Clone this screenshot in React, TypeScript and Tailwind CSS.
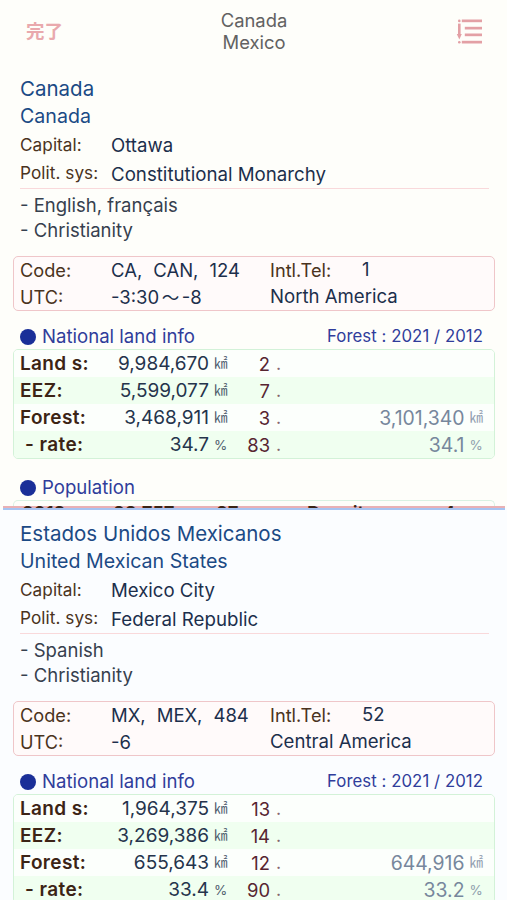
import React from "react";

type LandRow = {
  label: string;
  indent?: boolean;
  value: string;
  unit: string;
  rank: string;
  past?: string;
};

type Country = {
  native: string;
  english: string;
  capital: string;
  system: string;
  language: string;
  religion: string;
  codes: string[];
  tel: string;
  utc: string[];
  region: string;
  land: LandRow[];
};

const canada: Country = {
  native: "Canada",
  english: "Canada",
  capital: "Ottawa",
  system: "Constitutional Monarchy",
  language: "English, français",
  religion: "Christianity",
  codes: ["CA,", "CAN,", "124"],
  tel: "1",
  utc: ["-3:30", "-8"],
  region: "North America",
  land: [
    { label: "Land s:", value: "9,984,670", unit: "㎢", rank: "2" },
    { label: "EEZ:", value: "5,599,077", unit: "㎢", rank: "7" },
    { label: "Forest:", value: "3,468,911", unit: "㎢", rank: "3", past: "3,101,340" },
    { label: "- rate:", indent: true, value: "34.7", unit: "%", rank: "83", past: "34.1" },
  ],
};

const mexico: Country = {
  native: "Estados Unidos Mexicanos",
  english: "United Mexican States",
  capital: "Mexico City",
  system: "Federal Republic",
  language: "Spanish",
  religion: "Christianity",
  codes: ["MX,", "MEX,", "484"],
  tel: "52",
  utc: ["-6"],
  region: "Central America",
  land: [
    { label: "Land s:", value: "1,964,375", unit: "㎢", rank: "13" },
    { label: "EEZ:", value: "3,269,386", unit: "㎢", rank: "14" },
    { label: "Forest:", value: "655,643", unit: "㎢", rank: "12", past: "644,916" },
    { label: "- rate:", indent: true, value: "33.4", unit: "%", rank: "90", past: "33.2" },
  ],
};

function Unit({ unit }: { unit: string }) {
  return (
    <span className="ml-[5px] w-[14px] shrink-0 text-left text-[13.5px] leading-none opacity-80">
      {unit}
    </span>
  );
}

function SectionTitle({ title, note }: { title: string; note?: string }) {
  return (
    <div className="flex h-[26px] items-center pl-5 pr-[24px] text-[#303d9b]">
      <span className="mr-[6px] size-4 rounded-full bg-[#1a2f98]" />
      <span className="text-[18.6px]">{title}</span>
      {note && <span className="ml-auto text-[16.8px] tracking-[0.05px]">{note}</span>}
    </div>
  );
}

function CountryInfo({ country }: { country: Country }) {
  return (
    <>
      <div className="px-5 pt-3 text-[#1b4a85]">
        <h1 className="h-[27px] text-[20.5px] leading-[27px]">{country.native}</h1>
        <h2 className="h-[29px] text-[19.6px] leading-7">{country.english}</h2>
      </div>
      <div className="ml-5 mr-[18px] h-[58px] border-b border-[#f9d9db]">
        <div className="flex h-[29px] items-center">
          <span className="w-[91px] pb-px text-[17.2px] tracking-[0.05px] text-[#4a3320]">Capital:</span>
          <span className="text-[18.6px] text-[#1c2f4c]">{country.capital}</span>
        </div>
        <div className="flex h-[29px] items-center">
          <span className="w-[91px] pb-1 text-[17.2px] tracking-[0.05px] text-[#4a3320]">Polit. sys:</span>
          <span className="pt-[2px] text-[18.7px] text-[#1c2f4c]">{country.system}</span>
        </div>
      </div>
      <div className="h-[67px] px-5 pt-1 text-[18.5px] leading-[25px] text-[#36404e]">
        <div>- {country.language}</div>
        <div>- {country.religion}</div>
      </div>
      <div className="ml-[13px] mr-3 h-[55px] rounded-[5px] border border-[#efc6c9] bg-[#fffafa] pl-[6px] text-[18.5px] text-[#1c2f4c]">
        <div className="flex h-[27px] items-center">
          <span className="w-[91px] text-[18.2px] text-[#4a3320]">Code:</span>
          <span className="flex w-[159px] gap-[11px]">
            {country.codes.map((code) => (
              <span key={code}>{code}</span>
            ))}
          </span>
          <span className="w-[92px] text-[18.2px] text-[#4a3320]">Intl.Tel:</span>
          <span className="pb-[2px]">{country.tel}</span>
        </div>
        <div className="flex h-[27px] items-center">
          <span className="w-[91px] text-[18.2px] text-[#4a3320]">UTC:</span>
          <span className="flex w-[159px] items-center">
            {country.utc[0]}
            {country.utc[1] && (
              <>
                <span className="mx-[2.5px] text-[17.5px] leading-none">～</span>
                {country.utc[1]}
              </>
            )}
          </span>
          <span className="pb-[2px] text-[18.6px]">{country.region}</span>
        </div>
      </div>
      <div className="pt-[13px]">
        <SectionTitle title="National land info" note="Forest : 2021 / 2012" />
      </div>
      <div className="-mt-px ml-[13px] mr-3 h-[110px] overflow-hidden rounded-[5px] border border-[#d3f2d8]">
        {country.land.map((row) => (
          <div
            key={row.label}
            className="flex h-[27.1px] items-center bg-[#fcfffc] pl-[6px] pr-[10.5px] pt-px text-[18.9px] leading-[26px] even:bg-[#f0fff0]"
          >
            <span
              className={
                row.indent
                  ? "w-[92px] pl-[5px] text-[19px] font-semibold tracking-[0.4px] text-[#3c2415]"
                  : "w-[92px] text-[19px] font-semibold tracking-[0.35px] text-[#3c2415]"
              }
            >
              {row.label}
            </span>
            <span className="w-[97px] text-right text-[19px] text-[#25344c]">{row.value}</span>
            <span className="flex text-[#25344c]">
              <Unit unit={row.unit} />
            </span>
            <span className="w-[42px] text-right text-[18.4px] text-[#572531]">{row.rank}</span>
            <span className="ml-[6px] text-[18px] text-[#572531] opacity-70">.</span>
            {row.past && (
              <span className="ml-auto flex items-center text-[19.4px] text-[#77879c]">
                {row.past}
                <Unit unit={row.unit} />
              </span>
            )}
          </div>
        ))}
      </div>
    </>
  );
}

function ListOrderIcon() {
  return (
    <svg className="h-[26px] w-[26px]" viewBox="0 0 26 26" fill="#e3a0a5">
      <rect x="5.8" y="0.5" width="20.2" height="2.7" />
      <rect x="8.8" y="7.8" width="17.2" height="2.7" />
      <rect x="8.8" y="14.5" width="17.2" height="2.7" />
      <rect x="5.8" y="21.8" width="20.2" height="2.7" />
      <circle cx="3.3" cy="1.9" r="1.3" />
      <circle cx="3.3" cy="23.2" r="1.3" />
      <rect x="2" y="4.6" width="2.6" height="12" />
      <path d="M0.8 15h5L3.3 20.4z" />
    </svg>
  );
}

export default function App() {
  return (
    <div className="flex h-[900px] w-[507px] flex-col overflow-hidden bg-[#fefefa] font-['Inter','Noto_Sans_CJK_JP',sans-serif]">
      <header className="flex h-[63px] shrink-0 items-center justify-between pl-[26px] pr-[25px]">
        <button className="w-[60px] text-left text-[18.5px] font-bold text-[#e9a9ad]">完了</button>
        <div className="pb-px text-center text-[18.4px] leading-[22px] text-[#626262]">
          <div>Canada</div>
          <div>Mexico</div>
        </div>
        <div className="flex w-[60px] justify-end">
          <ListOrderIcon />
        </div>
      </header>
      <section className="relative h-[445px] shrink-0 overflow-hidden">
        <CountryInfo country={canada} />
        <div className="pt-4">
          <SectionTitle title="Population" />
        </div>
        <div className="-mt-px ml-[13px] mr-3 flex h-[20px] rounded-t-[5px] border border-b-0 border-[#d9f2e3] pl-[8px] text-[18.5px] leading-[24px] font-semibold text-[#3c2415]">
          <span className="relative z-10 w-[91px]">2018</span>
          <span className="relative z-10 w-[103px]">38,757</span>
          <span className="relative z-10 w-[91px]">37</span>
          <span className="relative z-10 w-[136px]">Density:</span>
          <span className="relative z-10">4</span>
        </div>
        <div className="absolute bottom-0 left-[3px] right-[2px] h-[2px] bg-[#e9b1b5]" />
      </section>
      <section className="h-[392px] shrink-0 overflow-hidden bg-[#fbfdff]">
        <div className="ml-[3px] mr-[2px] h-[2px] bg-[#a6c4f2]" />
        <div className="-mt-[2px]">
          <CountryInfo country={mexico} />
        </div>
      </section>
    </div>
  );
}
